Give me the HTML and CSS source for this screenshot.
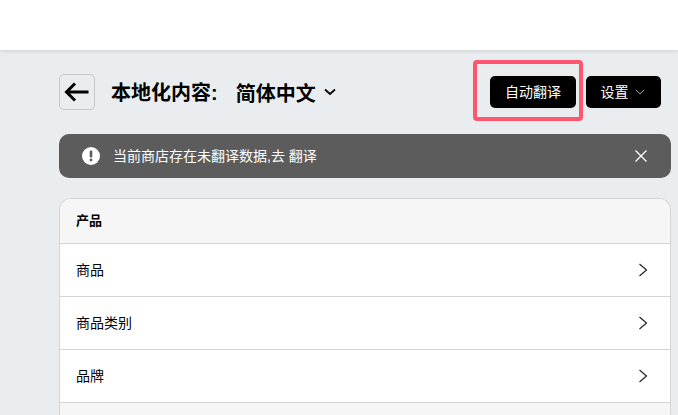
FILE: index.html
```html
<!DOCTYPE html>
<html lang="zh-CN">
<head>
    <meta charset="UTF-8">
    <title>本地化内容</title>
    <link rel="stylesheet" href="styles.css">
</head>
<body>

    <div class="topbar"></div>

    <div class="content">
        <div class="page-head">
            <button class="back-btn" type="button">
                <svg width="26" height="22" viewBox="0 0 26 22"><path d="M24.500 11H2.500M11 2.500L2.500 11l8.500 8.500" fill="none" stroke="#000" stroke-width="3"/></svg>
            </button>
            <h1 class="page-title">本地化内容:</h1>
            <div class="lang-select">
                <span>简体中文</span>
                <svg width="12" height="8" viewBox="0 0 12 8"><path d="M1 1.500l5 4.500 5-4.500" fill="none" stroke="#000" stroke-width="1.800"/></svg>
            </div>
            <div class="head-actions">
                <button class="black-btn auto-btn" type="button"><span>自动翻译</span></button>
                <button class="black-btn settings-btn" type="button">
                    <span>设置</span>
                    <svg width="10" height="6" viewBox="0 0 10 6"><path d="M.8.800L5 4.800 9.200.800" fill="none" stroke="#aaa" stroke-width="1"/></svg>
                </button>
                <div class="highlight"></div>
            </div>
        </div>

        <div class="notice">
            <svg class="notice-icon" width="18" height="18" viewBox="0 0 18 18"><circle cx="9" cy="9" r="9" fill="#fff"/><rect x="7.700" y="3.500" width="2.600" height="7" rx="1" fill="#5c5c5c"/><circle cx="9" cy="13" r="1.400" fill="#5c5c5c"/></svg>
            <span class="notice-text">当前商店存在未翻译数据,去 翻译</span>
            <svg class="notice-close" width="14" height="14" viewBox="0 0 14 14"><path d="M1.500 1.500l11 11M12.500 1.500l-11 11" fill="none" stroke="#fff" stroke-width="1.300"/></svg>
        </div>

        <div class="card">
            <div class="card-head"><span>产品</span></div>
            <div class="card-row">
                <span>商品</span>
                <svg width="10" height="14" viewBox="0 0 10 14"><path d="M1.500 1l7 6-7 6" fill="none" stroke="#222" stroke-width="1.200"/></svg>
            </div>
            <div class="card-row">
                <span>商品类别</span>
                <svg width="10" height="14" viewBox="0 0 10 14"><path d="M1.500 1l7 6-7 6" fill="none" stroke="#222" stroke-width="1.200"/></svg>
            </div>
            <div class="card-row">
                <span>品牌</span>
                <svg width="10" height="14" viewBox="0 0 10 14"><path d="M1.500 1l7 6-7 6" fill="none" stroke="#222" stroke-width="1.200"/></svg>
            </div>
            <div class="card-head"></div>
        </div>
    </div>

</body>
</html>
```

FILE: styles.css
```css
html, body {
    height: 100%;
    overflow: hidden;
}

body {
    margin: 0;
    background-color: #e9edf0;
    color: #000;
    font-family: "Liberation Sans", "Noto Sans CJK SC", sans-serif;
}

.topbar {
    height: 50px;
    background-color: #fff;
    box-shadow: 0 1px 4px rgba(0, 0, 0, 0.12);
}

.content {
    box-sizing: border-box;
    height: calc(100vh - 50px);
    padding: 24px 7px 0 59px;
    overflow: hidden;
}

.page-head {
    display: flex;
    align-items: center;
    height: 36px;
    padding-right: 10px;
}

.back-btn {
    display: flex;
    align-items: center;
    justify-content: center;
    width: 36px;
    height: 36px;
    padding: 0;
    border: 1px solid #c4c7cb;
    border-radius: 5px;
    background: transparent;
}

.page-title {
    margin: 2px 0 0 16px;
    font-size: 20px;
    font-weight: 700;
    line-height: 36px;
}

.lang-select {
    display: flex;
    align-items: center;
    gap: 8px;
    margin-left: 18px;
    font-size: 20px;
    font-weight: 700;
}

.head-actions {
    position: relative;
    display: flex;
    gap: 10px;
    margin-left: auto;
}

.black-btn {
    display: flex;
    align-items: center;
    justify-content: center;
    height: 32px;
    padding: 0 0 3px;
    border: none;
    border-radius: 5px;
    background-color: #000;
    color: #fff;
    font-family: inherit;
    font-size: 14px;
}

.auto-btn {
    width: 86px;
}

.settings-btn {
    gap: 6px;
    width: 75px;
    padding-right: 2px;
}

.settings-btn svg {
    margin-top: 3px;
}

.highlight {
    position: absolute;
    left: -17px;
    top: -16px;
    width: 110px;
    height: 61px;
    box-sizing: border-box;
    border: 4px solid #ff5670;
    border-radius: 4px;
}

.notice {
    display: flex;
    align-items: center;
    height: 44px;
    margin-top: 24px;
    padding: 0 23px;
    border-radius: 10px;
    background-color: #5c5c5c;
    color: #fff;
    font-size: 14px;
}

.notice-text {
    margin: -3px 0 0 13px;
}

.notice-close {
    margin-left: auto;
}

.card {
    margin-top: 20px;
    border: 1px solid #d3d4d6;
    border-bottom: none;
    border-radius: 12px 12px 0 0;
    background-color: #fff;
    font-size: 14px;
}

.card-head {
    display: flex;
    align-items: center;
    height: 44px;
    padding: 0 16px;
    border-radius: 12px 12px 0 0;
    background-color: #f6f6f6;
    font-size: 13px;
    font-weight: 700;
}

.card-head span {
    margin-top: -3px;
}

.card-row {
    display: flex;
    align-items: center;
    justify-content: space-between;
    height: 52px;
    padding: 0 22px 0 16px;
    border-top: 1px solid #d3d4d6;
}

.card-row span {
    margin-top: -3px;
}

.card-row + .card-head {
    border-top: 1px solid #d3d4d6;
    border-radius: 0;
}
```
